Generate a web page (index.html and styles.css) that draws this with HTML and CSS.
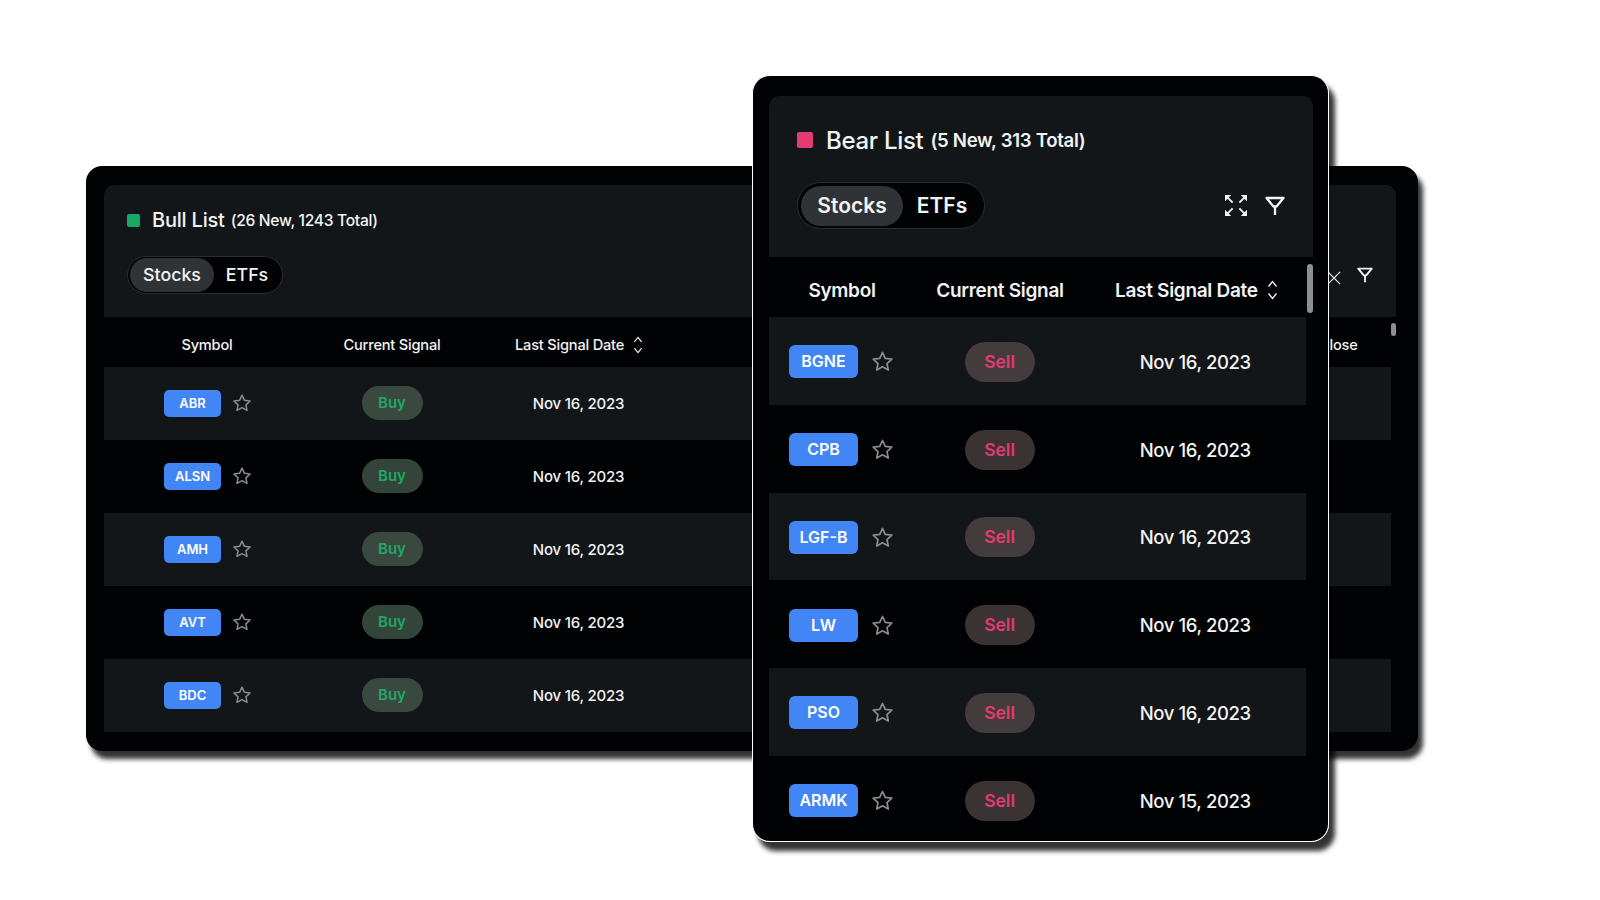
FILE: index.html

```html
<!DOCTYPE html>
<html>
<head>
    <title>Bull and Bear Lists</title>
    <meta name="viewport" content="width=device-width, initial-scale=1.0">
    <link rel="stylesheet" href="styles.css">
</head>
<body>
    <svg class="defs" width="0" height="0">
        <defs>
            <symbol id="star" viewBox="0 0 24 24"><path d="M12 2.6l2.9 6.2 6.8.8-5 4.600 1.300 6.700-6-3.300-6 3.300 1.300-6.700-5-4.600 6.800-.8z" fill="none" stroke="currentColor" stroke-width="1.800" stroke-linejoin="round"/></symbol>
            <symbol id="filter" viewBox="0 0 20 20"><path d="M1.500 2h17l-7 8.500h-3zM10 10.500V19" fill="none" stroke="currentColor" stroke-width="2.300" stroke-linejoin="round"/></symbol>
            <symbol id="expand" viewBox="0 0 23 22">
                <path d="M0 0h6.500L0 6.500zM23 0h-6.500L23 6.500zM0 22h6.500L0 15.500zM23 22h-6.500l6.500-6.500z" fill="currentColor"/>
                <path d="M2 2l6 6M21 2l-6 6M2 20l6-6M21 20l-6-6" fill="none" stroke="currentColor" stroke-width="2"/>
            </symbol>
            <symbol id="cross" viewBox="0 0 16 16"><path d="M1 1l14 14M15 1L1 15" fill="none" stroke="currentColor" stroke-width="1.500"/></symbol>
            <symbol id="sort" viewBox="0 0 10 20"><path d="M1 6.500L5 1.500l4 5M1 13.500l4 5 4-5" fill="none" stroke="currentColor" stroke-width="1.300"/></symbol>
        </defs>
    </svg>

    <!-- shadow of the bear card, kept behind the bull card -->
    <div class="bear-shadow"></div>

    <!-- Bull list, sits behind -->
    <section class="card bull">
        <div class="panel">
            <div class="title-row">
                <span class="swatch swatch-green"></span>
                <span class="title">Bull List</span>
                <span class="count">(26 New, 1243 Total)</span>
            </div>
            <div class="tool-row">
                <div class="toggle">
                    <span class="toggle-item active">Stocks</span>
                    <span class="toggle-item">ETFs</span>
                </div>
                <div class="tools">
                    <svg class="icon-expand"><use href="#cross"/></svg>
                    <svg class="icon-filter"><use href="#filter"/></svg>
                </div>
            </div>
        </div>
        <div class="thead">
            <span class="th-symbol">Symbol</span>
            <span class="th-signal">Current Signal</span>
            <span class="th-date">Last Signal Date <svg class="icon-sort"><use href="#sort"/></svg></span>
            <span class="th-close">Close</span>
        </div>
        <span class="scrollbar"></span>
        <div class="tbody">
            <div class="row"><span class="cell-symbol"><span class="badge">ABR</span><svg class="icon-star"><use href="#star"/></svg></span><span class="cell-signal"><span class="pill buy">Buy</span></span><span class="cell-date">Nov 16, 2023</span></div>
            <div class="row"><span class="cell-symbol"><span class="badge">ALSN</span><svg class="icon-star"><use href="#star"/></svg></span><span class="cell-signal"><span class="pill buy">Buy</span></span><span class="cell-date">Nov 16, 2023</span></div>
            <div class="row"><span class="cell-symbol"><span class="badge">AMH</span><svg class="icon-star"><use href="#star"/></svg></span><span class="cell-signal"><span class="pill buy">Buy</span></span><span class="cell-date">Nov 16, 2023</span></div>
            <div class="row"><span class="cell-symbol"><span class="badge">AVT</span><svg class="icon-star"><use href="#star"/></svg></span><span class="cell-signal"><span class="pill buy">Buy</span></span><span class="cell-date">Nov 16, 2023</span></div>
            <div class="row"><span class="cell-symbol"><span class="badge">BDC</span><svg class="icon-star"><use href="#star"/></svg></span><span class="cell-signal"><span class="pill buy">Buy</span></span><span class="cell-date">Nov 16, 2023</span></div>
        </div>
    </section>

    <!-- Bear list, on top -->
    <section class="card bear">
        <div class="panel">
            <div class="title-row">
                <span class="swatch swatch-pink"></span>
                <span class="title">Bear List</span>
                <span class="count">(5 New, 313 Total)</span>
            </div>
            <div class="tool-row">
                <div class="toggle">
                    <span class="toggle-item active">Stocks</span>
                    <span class="toggle-item">ETFs</span>
                </div>
                <div class="tools">
                    <svg class="icon-expand"><use href="#expand"/></svg>
                    <svg class="icon-filter"><use href="#filter"/></svg>
                </div>
            </div>
        </div>
        <div class="thead">
            <span class="th-symbol">Symbol</span>
            <span class="th-signal">Current Signal</span>
            <span class="th-date">Last Signal Date <svg class="icon-sort"><use href="#sort"/></svg></span>
        </div>
        <span class="scrollbar"></span>
        <div class="tbody">
            <div class="row"><span class="cell-symbol"><span class="badge">BGNE</span><svg class="icon-star"><use href="#star"/></svg></span><span class="cell-signal"><span class="pill sell">Sell</span></span><span class="cell-date">Nov 16, 2023</span></div>
            <div class="row"><span class="cell-symbol"><span class="badge">CPB</span><svg class="icon-star"><use href="#star"/></svg></span><span class="cell-signal"><span class="pill sell">Sell</span></span><span class="cell-date">Nov 16, 2023</span></div>
            <div class="row"><span class="cell-symbol"><span class="badge">LGF-B</span><svg class="icon-star"><use href="#star"/></svg></span><span class="cell-signal"><span class="pill sell">Sell</span></span><span class="cell-date">Nov 16, 2023</span></div>
            <div class="row"><span class="cell-symbol"><span class="badge">LW</span><svg class="icon-star"><use href="#star"/></svg></span><span class="cell-signal"><span class="pill sell">Sell</span></span><span class="cell-date">Nov 16, 2023</span></div>
            <div class="row"><span class="cell-symbol"><span class="badge">PSO</span><svg class="icon-star"><use href="#star"/></svg></span><span class="cell-signal"><span class="pill sell">Sell</span></span><span class="cell-date">Nov 16, 2023</span></div>
            <div class="row"><span class="cell-symbol"><span class="badge">ARMK</span><svg class="icon-star"><use href="#star"/></svg></span><span class="cell-signal"><span class="pill sell">Sell</span></span><span class="cell-date">Nov 15, 2023</span></div>
        </div>
    </section>
</body>
</html>
```

FILE: styles.css

```css
body {
    margin: 0;
    height: 900px;
    overflow: hidden;
    position: relative;
    background: #fff;
    font-family: Inter, "Liberation Sans", sans-serif;
    color: #f2f3f3;
}
.defs { position: absolute; }

/* the two windows are placed freely on the canvas */
.card {
    position: absolute;
    box-sizing: border-box;
    background: #010203;
    overflow: hidden;
}
.bull {
    left: 86px;
    top: 166px;
    width: 1332px;
    height: 585px;
    padding: 19px 22px 0 18px;
    border-radius: 16px;
    box-shadow: 5px 8px 5px rgba(0, 0, 0, 0.8);
}
.bear {
    left: 752px;
    top: 75px;
    width: 577px;
    height: 767px;
    padding: 20px 15px 0 16px;
    border: 1px solid #fff;
    border-radius: 18px;
    z-index: 2;
}
.bear-shadow {
    position: absolute;
    left: 752px;
    top: 75px;
    width: 577px;
    height: 767px;
    border-radius: 18px;
    box-shadow: 6px 9px 5px rgba(0, 0, 0, 0.8);
}

.panel {
    background: #131618;
    border-radius: 10px 10px 0 0;
    box-sizing: border-box;
}
.bull .panel { height: 132px; padding: 0 23px; }
.bear .panel { height: 161px; padding: 0 28px; }

.title-row { display: flex; align-items: center; }
.bull .title-row { height: 20px; padding-top: 25px; }
.bear .title-row { height: 26px; padding-top: 31px; }
.swatch { border-radius: 2px; flex: none; }
.swatch-green { background: #1aa866; }
.swatch-pink { background: #e33a72; }
.bull .swatch { width: 13px; height: 13px; margin: 0 12px 0 0; }
.bear .swatch { width: 16px; height: 16px; margin: 0 13px 0 0; }
.title, .count { font-weight: 500; }
.bull .title { font-size: 20px; letter-spacing: -0.2px; }
.bull .count { font-size: 15.600px; letter-spacing: -0.3px; margin-left: 6px; }
.bear .title { font-size: 24px; letter-spacing: -0.3px; }
.bear .count { font-size: 18.600px; letter-spacing: -0.3px; margin-left: 7px; font-weight: 600; }

.tool-row { display: flex; align-items: center; justify-content: space-between; }
.bull .tool-row { margin-top: 26px; }
.bear .tool-row { margin-top: 29px; }

.toggle {
    display: flex;
    align-items: center;
    box-sizing: border-box;
    background: #010203;
    border: 1px solid #2a2d30;
    border-radius: 30px;
}
.toggle-item { flex: none; font-weight: 500; text-align: center; }
.toggle-item.active { background: #303335; border-radius: 30px; }
.bull .toggle { width: 156px; height: 38px; padding: 0 2px; font-size: 17.800px; }
.bull .toggle-item { width: 66px; line-height: 34px; }
.bull .toggle-item.active { width: 84px; }
.bear .toggle { width: 188px; height: 47px; padding: 0 3px; font-size: 21px; }
.bear .toggle-item { width: 78px; line-height: 40px; font-weight: 600; }
.bear .toggle-item.active { width: 102px; }

.tools { display: flex; align-items: center; }
.bull .tools { gap: 16px; }
.bull .icon-expand { width: 14px; height: 14px; margin-top: 6px; }
.bull .icon-filter { width: 16px; height: 16px; }
.bear .tools { gap: 18px; }
.bear .icon-expand { width: 22px; height: 21px; }
.bear .icon-filter { width: 20px; height: 20px; }

.thead { display: flex; align-items: center; position: relative; box-sizing: border-box; font-weight: 500; }
.thead span { display: flex; align-items: center; }
.bull .thead { height: 50px; padding-top: 5px; font-size: 14.600px; letter-spacing: -0.2px; }
.bear .thead { height: 60px; padding-top: 6px; font-size: 19px; letter-spacing: -0.3px; font-weight: 600; }
.th-symbol, .th-signal, .cell-symbol, .cell-signal { justify-content: center; }
.bull .th-symbol, .bull .cell-symbol { width: 206px; }
.bull .th-signal, .bull .cell-signal { width: 164px; }
.bull .th-date { width: 450px; padding-left: 41px; box-sizing: border-box; gap: 9px; }
.bull .th-close { margin-left: 395px; }
.bear .th-symbol { width: 146px; }
.bear .cell-symbol { width: 146px; }
.bear .th-signal, .bear .cell-signal { width: 170px; }
.bear .th-date { padding-left: 30px; gap: 9px; white-space: nowrap; }
.icon-sort { flex: none; }
.bull .icon-sort { width: 10px; height: 18px; }
.bear .icon-sort { width: 11px; height: 20px; }

.scrollbar { position: absolute; background: #8c8e90; border-radius: 3px; }
.bull .scrollbar { left: 1305px; top: 157px; width: 5px; height: 13px; }
.bear .scrollbar { left: 554px; top: 188px; width: 6px; height: 49px; }

.row { display: flex; align-items: center; box-sizing: border-box; }
.row:nth-child(odd) { background: #131618; }
.bull .row { height: 73px; width: 1287px; padding-bottom: 1px; }
.bear .row { height: 87.750px; width: 537px; padding-top: 2px; }

.cell-symbol, .cell-signal { display: flex; align-items: center; box-sizing: border-box; }
.badge {
    display: block;
    box-sizing: border-box;
    background: #4285f4;
    color: #fff;
    font-weight: 600;
    text-align: center;
    border-radius: 5px;
}
.bull .badge { width: 57px; line-height: 27px; font-size: 13px; margin-right: 11px; }
.bear .badge { width: 69px; line-height: 33px; font-size: 16px; margin-right: 13px; border-radius: 6px; }
.bull .cell-symbol { justify-content: flex-start; padding-left: 60px; }
.bear .cell-symbol { justify-content: flex-start; padding-left: 20px; }

.icon-star { color: #8a8c8e; flex: none; }
.bull .icon-star { width: 20px; height: 20px; }
.bear .icon-star { width: 23px; height: 23px; }

.pill { display: block; text-align: center; font-weight: 600; }
.buy { background: #33443a; color: #1fa764; }
.row:nth-child(odd) .buy { background: #39493f; }
.sell { background: #3a3233; color: #e23b72; }
.row:nth-child(odd) .sell { background: #433b3c; }
.bull .pill { width: 61px; line-height: 34px; border-radius: 17px; font-size: 15px; }
.bear .pill { width: 70px; line-height: 40px; border-radius: 20px; font-size: 17.500px; }

.cell-date { text-align: center; font-weight: 500; }
.bull .cell-date { font-size: 15px; width: 209px; letter-spacing: -0.2px; }
.bear .cell-date { font-size: 18.500px; width: 222px; letter-spacing: -0.4px; }
```
